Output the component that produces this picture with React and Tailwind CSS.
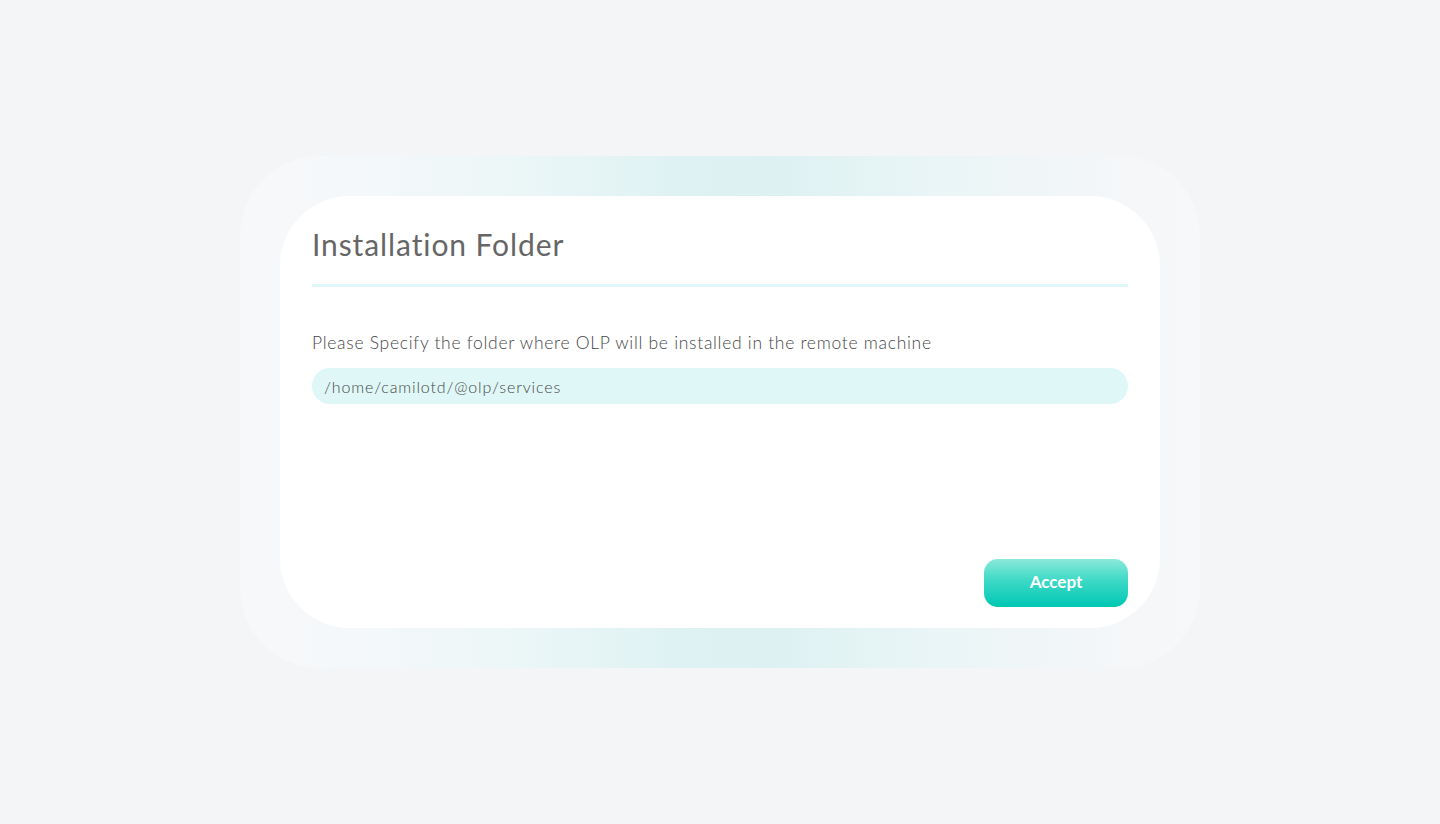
import React from "react";

const App = () => {
  return (
    <div className="min-h-screen w-full bg-[#f4f5f7] flex items-center justify-center font-['Lato','Open_Sans',sans-serif]">
      {/* Outer glow frame */}
      <div className="w-[960px] h-[512px] rounded-[80px] p-10 bg-[linear-gradient(90deg,#f7f8fa_0%,#f5f8fa_10%,#eef7f8_25%,#dff2f3_45%,#ddf1f2_55%,#e9f5f6_72%,#f3f6f8_88%,#f7f8fa_100%)]">
        {/* Card */}
        <div className="h-full bg-white rounded-[70px] px-8 pt-[30px] pb-[21px] flex flex-col">
          <h1 className="text-[30px] leading-9 tracking-[0.9px] text-[#666666] font-normal">
            Installation Folder
          </h1>
          <div className="mt-[22px] h-[3px] bg-[#dff7f8]" />

          <p className="mt-[44px] text-[17.5px] leading-6 tracking-[0.7px] text-[#474747] font-light">
            Please Specify the folder where OLP will be installed in the remote machine
          </p>

          <input
            type="text"
            defaultValue="/home/camilotd/@olp/services"
            className="mt-[13px] h-9 w-full rounded-full bg-[#dff7f7] px-3 text-[16px] tracking-[0.85px] text-[#474747] font-light outline-none"
          />

          <div className="mt-auto flex justify-end">
            <button className="w-36 h-12 rounded-[14px] bg-[linear-gradient(180deg,#8be9da_0%,#3dd9c6_45%,#00c7b3_100%)] text-white font-bold text-[17px] pb-[2px]">
              Accept
            </button>
          </div>
        </div>
      </div>
    </div>
  );
};

export default App;
